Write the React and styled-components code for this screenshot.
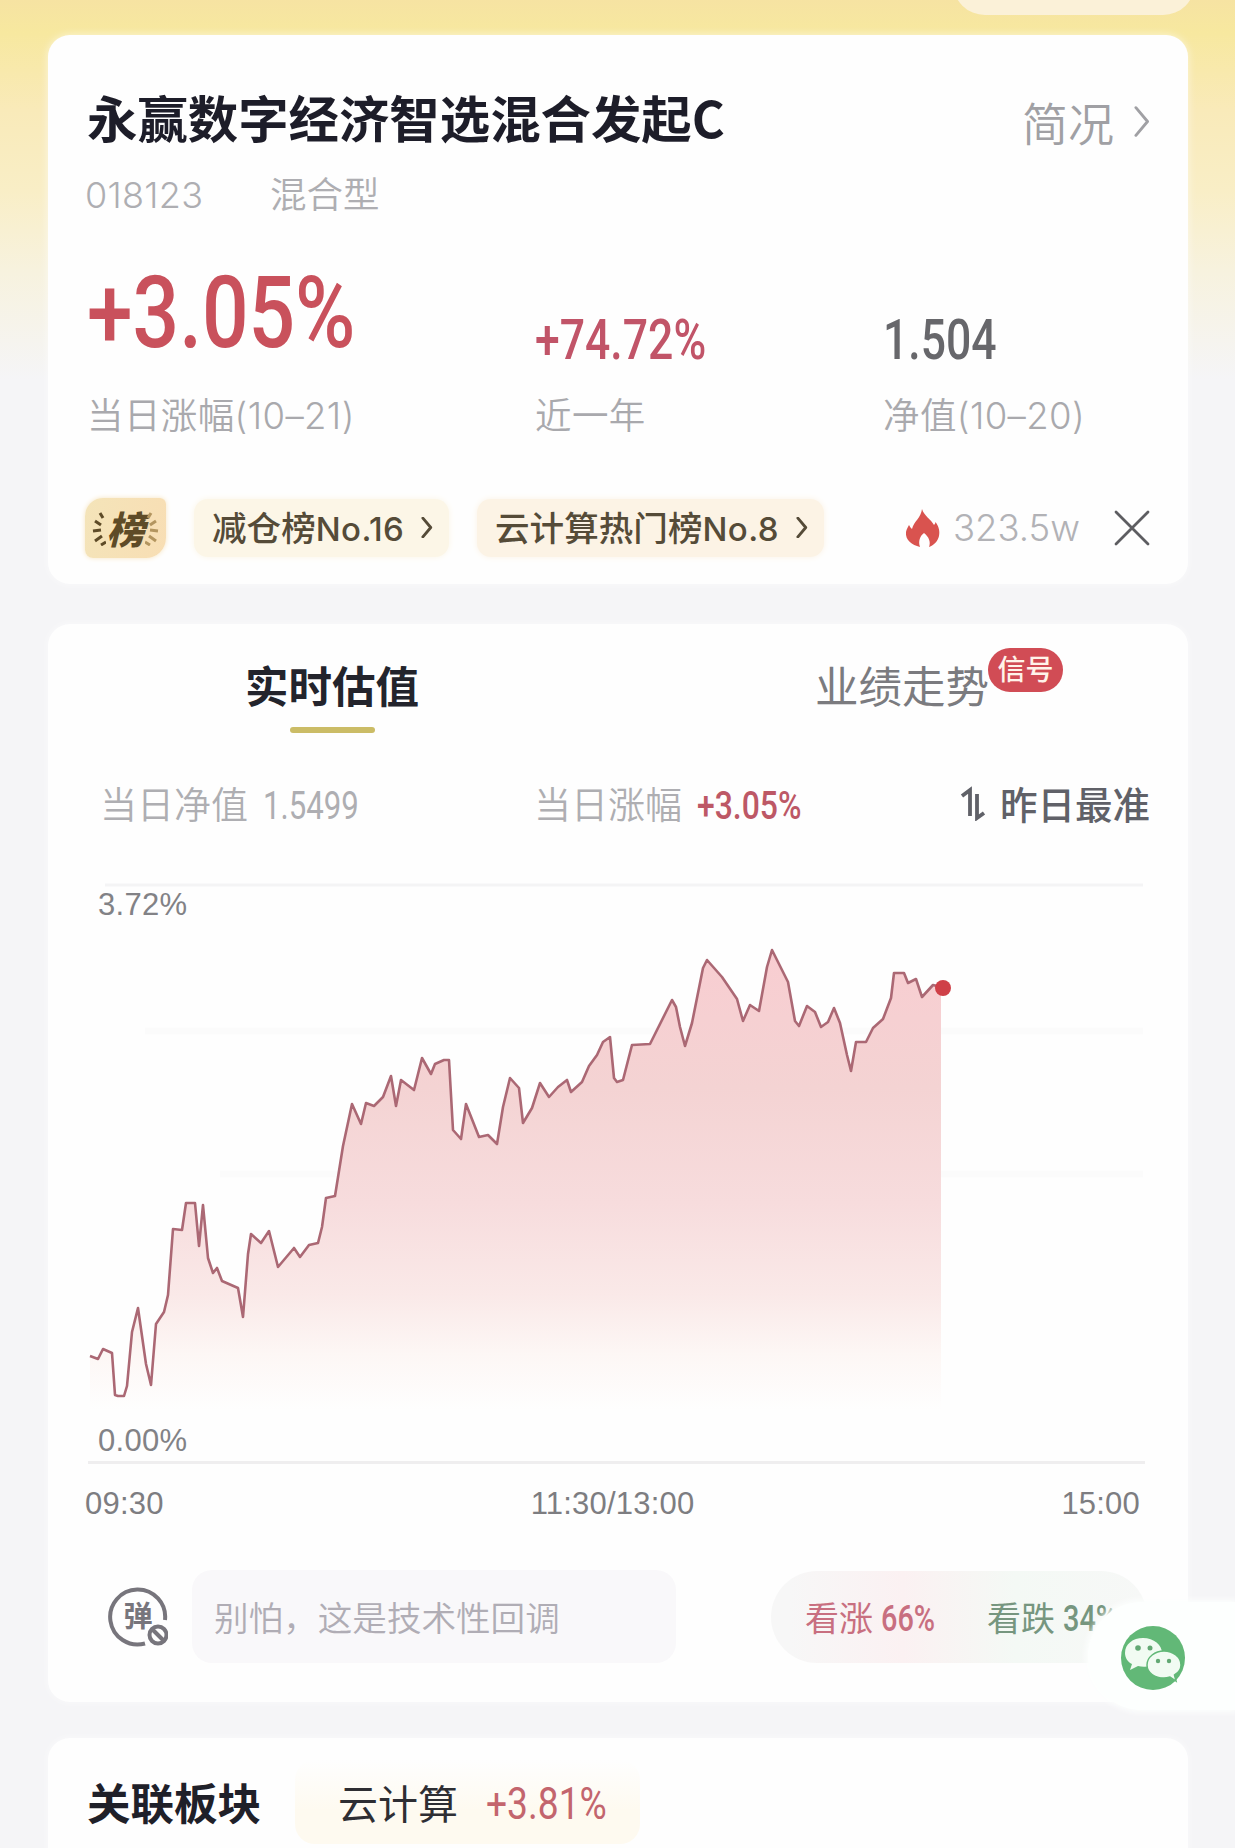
import styled, { createGlobalStyle } from "styled-components";

const GlobalStyle = createGlobalStyle`
  * {
    box-sizing: border-box;
  }
  body {
    margin: 0;
    background: #f5f5f7;
    font-family: "Noto Sans CJK SC", sans-serif;
  }
`;

const Page = styled.div`
  position: relative;
  display: flex;
  flex-direction: column;
  width: 1235px;
  height: 1848px;
  padding: 35px 47px 0 48px;
  overflow: hidden;
  background: linear-gradient(
    180deg,
    #f6e3a2 0,
    #f7e89f 32px,
    #f9eab9 110px,
    #f9eec6 190px,
    #f7f2de 270px,
    #f5f5f7 380px
  );
`;

const TopPill = styled.div`
  position: absolute;
  top: -50px;
  right: 40px;
  width: 242px;
  height: 65px;
  border-radius: 32px;
  background: #fbf1d8;
`;

const Card = styled.section`
  display: flex;
  flex-direction: column;
  flex-shrink: 0;
  height: ${(props) => props.$height}px;
  margin-bottom: ${(props) => props.$gap}px;
  padding: 0 38px 0 39px;
  border-radius: 22px;
  background: #fefefe;
  box-shadow: 0 0 8px rgba(255, 255, 255, 0.6);
`;

const TitleRow = styled.div`
  display: flex;
  justify-content: space-between;
  align-items: center;
  height: 60px;
  margin-top: 52px;
`;

const Title = styled.h1`
  margin: 0;
  font-size: 50.4px;
  line-height: 60px;
  font-weight: 700;
  color: #1d1d29;
`;

const Profile = styled.div`
  display: flex;
  align-items: center;
  gap: 20px;
  padding-top: 8px;
  font-size: 46px;
  line-height: 60px;
  font-weight: 350;
  color: #a0a0a4;
`;

const Meta = styled.div`
  display: flex;
  gap: 67px;
  height: 44px;
  margin: 20px 0 0 -2px;
  padding-top: 6px;
  font-family: Inter, "Noto Sans CJK SC", sans-serif;
  font-size: 36.5px;
  line-height: 44px;
  font-weight: 350;
  color: #aeaeb2;
`;

const Code = styled.span`
  width: 118px;
  font-size: 36px;
  letter-spacing: 0.3px;
`;

const Stats = styled.div`
  display: grid;
  grid-template-columns: 448px 348px 1fr;
  height: 175px;
  margin-top: 52px;
`;

const Stat = styled.div`
  display: flex;
  flex-direction: column;
  justify-content: flex-end;
`;

const Num = styled.span`
  display: inline-block;
  padding-top: ${(props) => props.$drop || 0}px;
  font-family: Roboto, sans-serif;
  font-size: ${(props) => props.$size}px;
  font-weight: ${(props) => props.$weight || 500};
  line-height: 1;
  color: ${(props) => props.$color || "inherit"};
  white-space: nowrap;
  transform: scaleX(${(props) => props.$squeeze || 0.82});
  transform-origin: left center;
`;

const StatLabel = styled.div`
  height: 44px;
  margin-top: ${(props) => props.$top}px;
  font-family: Inter, "Noto Sans CJK SC", sans-serif;
  font-size: 36.5px;
  line-height: 45px;
  font-weight: 350;
  letter-spacing: 0.4px;
  white-space: nowrap;
  color: #a9a9ad;
`;

const Tags = styled.div`
  display: flex;
  align-items: center;
  height: 63px;
  margin-top: 58px;
`;

const RankBadge = styled.div`
  display: flex;
  justify-content: center;
  align-items: center;
  width: 81px;
  height: 60px;
  margin: 0 28px 0 -2px;
  border-radius: 18px 6px 20px 8px;
  background: linear-gradient(100deg, #f4e4b9, #f8deb4);
  box-shadow: 0 0 5px #f8e6c2;
`;

const RankText = styled.span`
  font-size: 38px;
  font-weight: 900;
  font-style: italic;
  line-height: 56px;
  color: #5e4b27;
`;

const Tag = styled.div`
  display: flex;
  align-items: center;
  justify-content: space-between;
  width: ${(props) => props.$width}px;
  height: 58px;
  padding: 0 15px 0 18px;
  margin-right: 28px;
  border-radius: 14px;
  background: ${(props) => props.$bg};
  box-shadow: 0 0 6px ${(props) => props.$bg};
  font-size: 34.6px;
  font-weight: 500;
  line-height: 56px;
  color: #554b38;
  white-space: nowrap;
`;

const TagRank = styled.span`
  font-family: Inter, sans-serif;
  font-size: 33px;
  letter-spacing: 0.4px;
`;

const Heat = styled.div`
  display: flex;
  align-items: center;
  gap: 13px;
  margin-left: auto;
  font-family: Inter, sans-serif;
  font-size: 36.5px;
  line-height: 60px;
  font-weight: 350;
  color: #b2b2b6;

  svg:last-child {
    margin-left: 21px;
  }
`;

const Tabs = styled.div`
  display: grid;
  grid-template-columns: 1fr 1fr;
  height: 112px;
  margin: 0 -37px 0 -40px;
`;

const Tab = styled.div`
  display: flex;
  flex-direction: column;
  align-items: center;
  padding-top: 34px;
  font-size: 43.5px;
  line-height: 54px;
  font-weight: ${(props) => (props.$active ? 700 : 400)};
  color: ${(props) => (props.$active ? "#23242c" : "#7b7b7f")};

  &::after {
    content: "";
    display: ${(props) => (props.$active ? "block" : "none")};
    width: 85px;
    height: 6px;
    margin-top: 15px;
    border-radius: 3px;
    background: #cbbc66;
  }
`;

const TabLabel = styled.span`
  position: relative;
`;

const Signal = styled.span`
  position: absolute;
  left: calc(100% - 1px);
  top: -10px;
  width: 75px;
  height: 44px;
  border-radius: 22px;
  background: #d14c55;
  font-size: 28px;
  line-height: 40px;
  font-weight: 500;
  text-align: center;
  color: #fff3ea;
`;

const Summary = styled.div`
  display: grid;
  grid-template-columns: 434px 426px auto;
  height: 50px;
  margin-top: 42px;
  padding-left: 13px;
  font-size: 37px;
  line-height: 50px;
  font-weight: 350;
  color: #aeaeb2;
`;

const SummaryItem = styled.div`
  display: flex;
  align-items: center;
  gap: 15px;
  white-space: nowrap;
`;

const SortBy = styled(SummaryItem)`
  gap: 13px;
  font-size: 37.5px;
  font-weight: 500;
  color: #606168;
`;

const ChartBox = styled.div`
  position: relative;
  height: 590px;
  margin-top: 52px;

  svg {
    display: block;
  }
`;

const AxisLabel = styled.span`
  position: absolute;
  left: 11px;
  top: ${(props) => props.$top}px;
  font: 31px/34px "Liberation Sans", sans-serif;
  letter-spacing: 0.3px;
  color: #828286;
`;

const Times = styled.div`
  display: flex;
  justify-content: space-between;
  margin: 17px 10px 0 -2px;
  font: 31px/34px "Liberation Sans", sans-serif;
  letter-spacing: 0.2px;
  color: #7d7d81;
`;

const Footer = styled.div`
  display: flex;
  align-items: center;
  height: 96px;
  margin-top: 46px;
  padding: 3px 0 0 21px;
`;

const Comment = styled.div`
  width: 484px;
  height: 93px;
  margin: 0 95px 0 24px;
  padding-left: 22px;
  border-radius: 20px;
  background: #f9f8fa;
  font-size: 34.6px;
  line-height: 92px;
  font-weight: 350;
  color: #b0adb5;
`;

const Votes = styled.div`
  display: flex;
  flex-shrink: 0;
  width: 376px;
  height: 92px;
  border-radius: 46px;
  background: linear-gradient(90deg, #f7f7f7 5%, #fbf1f2 35%, #f4f9f5 65%, #f7f8f7);
  font-size: 34px;
  line-height: 92px;
`;

const Vote = styled.div`
  display: flex;
  align-items: center;
  gap: 8px;
  width: ${(props) => props.$width}px;
  padding-left: 34px;
  color: ${(props) => props.$color};
  white-space: nowrap;
`;

const Sector = styled.div`
  display: flex;
  align-items: center;
  height: 110px;
  padding-top: 17px;
`;

const SectorTitle = styled.h2`
  width: 208px;
  margin: 0;
  font-size: 43.5px;
  line-height: 60px;
  font-weight: 700;
  color: #1f2029;
`;

const SectorTag = styled.div`
  display: flex;
  align-items: center;
  gap: 28px;
  width: 345px;
  height: 84px;
  padding-left: 43px;
  border-radius: 20px;
  background: linear-gradient(180deg, rgba(254, 250, 240, 0), #fefaf0 60%);
  font-size: 40px;
  font-weight: 400;
  line-height: 60px;
  color: #2e2e33;
`;

const Share = styled.div`
  position: absolute;
  left: 1088px;
  top: 1602px;
  width: 147px;
  height: 108px;
  padding: 24px 0 0 33px;
  border-radius: 54px 0 0 54px;
  background: #fdfffe;
  box-shadow: 0 0 6px 2px #fdfffe;
`;

const points =
  "90,1356 98,1359 103,1349 112,1353 115,1395 118,1396 124,1396 127,1386 132,1332 138,1308 146,1364 151,1385 " +
  "156,1324 164,1312 168,1295 173,1229 182,1230 186,1203 195,1203 199,1246 203,1205 208,1258 213,1273 217,1268 " +
  "222,1281 238,1288 243,1317 248,1254 251,1234 261,1243 269,1231 278,1267 294,1248 300,1257 309,1245 318,1243 " +
  "322,1227 326,1198 335,1196 343,1146 352,1104 361,1124 366,1103 374,1106 383,1097 391,1076 396,1106 401,1080 " +
  "414,1090 422,1058 431,1074 435,1064 444,1060 449,1060 453,1130 461,1139 466,1104 479,1137 488,1135 497,1144 " +
  "503,1107 510,1078 519,1088 523,1123 532,1108 540,1083 549,1097 558,1087 567,1080 571,1092 582,1082 589,1066 " +
  "597,1055 603,1042 610,1037 614,1078 617,1082 623,1080 632,1045 650,1044 672,1000 676,1007 680,1027 685,1046 " +
  "692,1023 703,968 707,960 722,977 737,999 743,1021 750,1005 759,1011 767,967 772,950 788,982 795,1021 799,1026 " +
  "807,1006 815,1012 821,1027 828,1022 834,1008 840,1023 847,1055 851,1071 856,1042 866,1042 873,1028 883,1019 " +
  "891,998 894,973 904,973 908,983 916,979 922,997 933,985 941,987";

const Chevron = ({ width, height, stroke }) => (
  <svg width={width} height={height} viewBox="0 0 14 28" fill="none">
    <path
      d="M1.500 1.500 L12 14 L1.500 26.500"
      stroke="currentColor"
      strokeWidth={stroke}
      strokeLinecap="round"
      strokeLinejoin="round"
    />
  </svg>
);

const Flame = () => (
  <svg width="35" height="40" viewBox="0 0 35 38">
    <path
      d="M17 0C19 7 26 10 29 16c1-1 1.500-2 1.500-3C34 18 35 22 34 27c-1 5-5 9-10 11 2-5 0-10-5-14-4 3-6 8-4 14C7 36 0 31 1 23c.5-3 2-5 3-7 1 2 2 3 3 4C9 12 16 9 17 0Z"
      fill="#d9534f"
    />
  </svg>
);

const Close = () => (
  <svg width="36" height="36" viewBox="0 0 36 36" stroke="#5d5d61" strokeWidth="2.800">
    <path d="M2 2 L34 34 M34 2 L2 34" strokeLinecap="round" />
  </svg>
);

const Laurel = ({ flip }) => (
  <svg
    width="14"
    height="36"
    viewBox="0 0 14 36"
    fill="none"
    stroke={flip ? "#b3955f" : "#5e4b27"}
    strokeWidth="3"
    transform={flip ? "scale(-1 1)" : undefined}
  >
    <path d="M8 3l3 5M3 11l6 4M1 21l8-1M3 31l7-5M9 35l5-3" />
  </svg>
);

const SortArrows = () => (
  <svg width="27" height="36" viewBox="0 0 27 36" fill="none" stroke="#606168" strokeWidth="3.800">
    <path d="M2 11 L10 5 V31" />
    <path d="M17 9 V33 L24 28" />
  </svg>
);

const DanmuIcon = () => (
  <svg width="60" height="60" viewBox="0 0 60 60" fill="none" stroke="#77757c">
    <path d="M57 33A27.500 27.500 0 1 0 37 56.500" strokeWidth="4" />
    <text
      x="30"
      y="39.500"
      fontSize="29"
      fontWeight="700"
      textAnchor="middle"
      fill="#77757c"
      stroke="none"
    >
      弹
    </text>
    <circle cx="50" cy="48" r="8.500" strokeWidth="4" />
    <path d="M44 42 L56 54" strokeWidth="4" />
  </svg>
);

const WechatIcon = () => (
  <svg width="64" height="64" viewBox="0 0 64 64">
    <circle cx="32" cy="32" r="32" fill="#62b877" />
    <path
      d="M22 12C12 12 4 18 4 27c0 5 3 9 7 11l-2 6 8-4c2 .6 4 .8 6 .8C33 41 41 35 41 27S33 12 22 12Z"
      fill="#f1fbf2"
    />
    <path
      d="M43 25c-9 0-17 6-17 14s8 13 17 13c2 0 4-.4 6-1l6 4-1.500-6C57 47 60 43 60 39c0-8-8-14-17-14Z"
      fill="#f1fbf2"
      stroke="#62b877"
      strokeWidth="1.500"
    />
    <g fill="#62a873">
      <circle cx="17" cy="22" r="2.800" />
      <circle cx="29" cy="22" r="2.500" />
      <circle cx="37" cy="35" r="2.200" />
      <circle cx="48" cy="35" r="2.200" />
    </g>
  </svg>
);

const Chart = () => (
  <svg width="1063" height="590" viewBox="87 880 1063 590">
    <defs>
      <linearGradient id="area" gradientUnits="userSpaceOnUse" x1="0" y1="950" x2="0" y2="1410">
        <stop offset="0" stopColor="#f8cdd1" />
        <stop offset="0.300" stopColor="#f4d3d3" />
        <stop offset="0.550" stopColor="#f7dcdd" />
        <stop offset="0.750" stopColor="#fae9e8" />
        <stop offset="0.880" stopColor="#fdf7f5" />
        <stop offset="1" stopColor="#fefefe" />
      </linearGradient>
    </defs>
    <path d="M105 885H1143" stroke="#f4f4f5" strokeWidth="3" />
    <path d="M145 1031H1143M220 1174H1143" stroke="#fbfbfb" strokeWidth="7" />
    <path d="M88 1462.500H1145" stroke="#efeeef" strokeWidth="3" />
    <polygon points={`${points} 941,1410 90,1410`} fill="url(#area)" />
    <polyline points={points} fill="none" stroke="#ab6874" strokeWidth="2.600" strokeLinejoin="round" />
    <circle cx="943" cy="988" r="8" fill="#cf4048" />
  </svg>
);

export default function App() {
  return (
    <>
      <GlobalStyle />
      <Page>
        <TopPill />
        <Card $height={549} $gap={40}>
          <TitleRow>
            <Title>永赢数字经济智选混合发起C</Title>
            <Profile>
              简况
              <Chevron width={16} height={31} stroke={2.6} />
            </Profile>
          </TitleRow>
          <Meta>
            <Code>018123</Code>
            <span>混合型</span>
          </Meta>
          <Stats>
            <Stat>
              <Num $size={100} $color="#c9515c">
                +3.05%
              </Num>
              <StatLabel $top={31}>当日涨幅(10–21)</StatLabel>
            </Stat>
            <Stat>
              <Num $size={55} $color="#c15468" $squeeze={0.81}>
                +74.72%
              </Num>
              <StatLabel $top={26}>近一年</StatLabel>
            </Stat>
            <Stat>
              <Num $size={55} $color="#67676b" $squeeze={0.81}>
                1.504
              </Num>
              <StatLabel $top={26}>净值(10–20)</StatLabel>
            </Stat>
          </Stats>
          <Tags>
            <RankBadge>
              <Laurel />
              <RankText>榜</RankText>
              <Laurel flip />
            </RankBadge>
            <Tag $width={255} $bg="#fcf6e7">
              <span>
                减仓榜<TagRank>No.16</TagRank>
              </span>
              <Chevron width={14} height={21} stroke={3.8} />
            </Tag>
            <Tag $width={347} $bg="#fcf3e5">
              <span>
                云计算热门榜<TagRank>No.8</TagRank>
              </span>
              <Chevron width={14} height={21} stroke={3.8} />
            </Tag>
            <Heat>
              <Flame />
              323.5w
              <Close />
            </Heat>
          </Tags>
        </Card>

        <Card $height={1078} $gap={36}>
          <Tabs>
            <Tab $active>
              <TabLabel>实时估值</TabLabel>
            </Tab>
            <Tab>
              <TabLabel>
                业绩走势
                <Signal>信号</Signal>
              </TabLabel>
            </Tab>
          </Tabs>
          <Summary>
            <SummaryItem>
              当日净值
              <Num $size={38} $weight={400} $drop={6}>
                1.5499
              </Num>
            </SummaryItem>
            <SummaryItem>
              当日涨幅
              <Num $size={38} $color="#bd5866" $squeeze={0.84} $drop={6}>
                +3.05%
              </Num>
            </SummaryItem>
            <SortBy>
              <SortArrows />
              昨日最准
            </SortBy>
          </Summary>
          <ChartBox>
            <Chart />
            <AxisLabel $top={8}>3.72%</AxisLabel>
            <AxisLabel $top={544}>0.00%</AxisLabel>
          </ChartBox>
          <Times>
            <span>09:30</span>
            <span>11:30/13:00</span>
            <span>15:00</span>
          </Times>
          <Footer>
            <DanmuIcon />
            <Comment>别怕，这是技术性回调</Comment>
            <Votes>
              <Vote $width={182} $color="#c86f80">
                看涨
                <Num $size={37} $squeeze={0.78} $drop={3}>
                  66%
                </Num>
              </Vote>
              <Vote $width={190} $color="#76967f">
                看跌
                <Num $size={37} $squeeze={0.78} $drop={3}>
                  34%
                </Num>
              </Vote>
            </Votes>
          </Footer>
        </Card>

        <Card $height={140} $gap={0}>
          <Sector>
            <SectorTitle>关联板块</SectorTitle>
            <SectorTag>
              云计算
              <Num $size={44} $squeeze={0.845} $color="#c3656d" $weight={400} $drop={4}>
                +3.81%
              </Num>
            </SectorTag>
          </Sector>
        </Card>

        <Share>
          <WechatIcon />
        </Share>
      </Page>
    </>
  );
}
